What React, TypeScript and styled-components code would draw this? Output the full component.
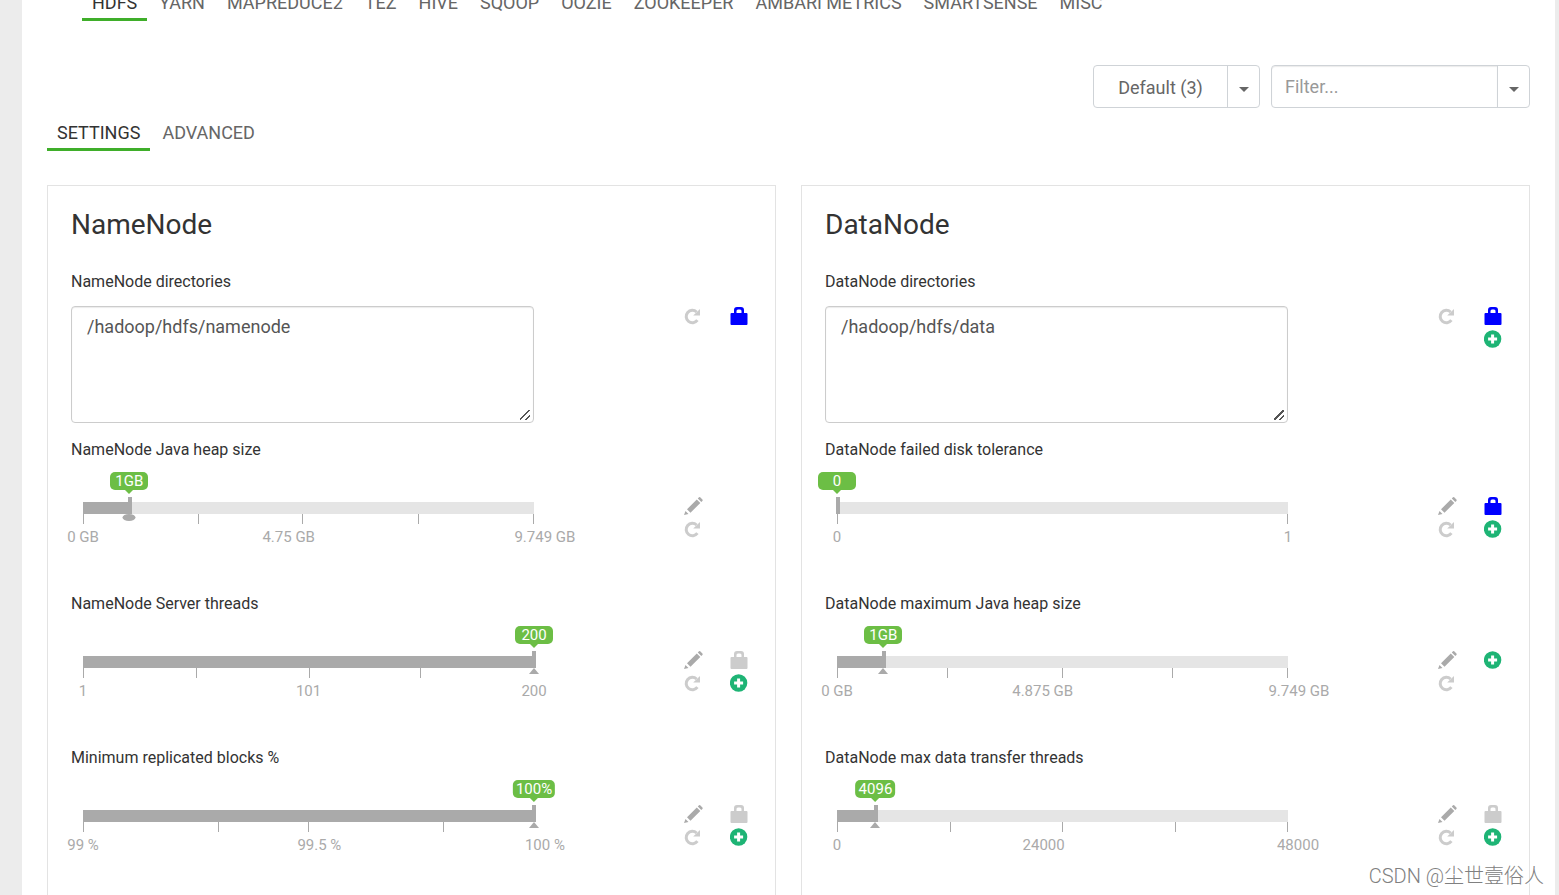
import React, { useState } from "react";
import styled, { createGlobalStyle, css } from "styled-components";

const GlobalStyle = createGlobalStyle`
  * { box-sizing: border-box; }
  body {
    margin: 0;
    background: #ececec;
    color: #333;
    font-family: Roboto, "Noto Sans CJK SC", sans-serif;
    font-size: 18px;
  }
`;

const Shell = styled.div`
  position: relative;
  height: 100vh;
  overflow: hidden;
  padding: 0 4px 0 22px;
`;

const Page = styled.main`
  min-height: 100vh;
  padding: 0 25px;
  background: #fff;
`;

const Tabs = styled.nav<{ $service?: boolean }>`
  display: flex;
  gap: 2px;
  ${(p) =>
    p.$service
      ? css`
          margin-top: -10px;
          padding-left: 35px;
        `
      : css`
          margin: 12px 0 34px;
        `}
`;

const Tab = styled.a<{ $active?: boolean }>`
  padding: 1px 10px 3px;
  border-bottom: 3px solid ${(p) => (p.$active ? "#3fae2a" : "transparent")};
  color: ${(p) => (p.$active ? "#333" : "#666")};
  font-size: 18px;
  line-height: 24px;
  white-space: nowrap;
  text-decoration: none;
  text-transform: uppercase;
`;

const Toolbar = styled.div`
  display: flex;
  justify-content: flex-end;
  gap: 11px;
  margin-top: 44px;
`;

const Group = styled.div`
  display: flex;
  height: 43px;
  border: 1px solid #cfd3d7;
  border-radius: 4px;
`;

const GroupButton = styled.button`
  width: 133px;
  padding: 2px 0 0;
  border: 0;
  background: none;
  color: #666;
  font: inherit;
`;

const CaretButton = styled.button`
  display: flex;
  align-items: center;
  justify-content: center;
  width: 32px;
  padding: 5px 0 0;
  border: 0;
  border-left: 1px solid #cfd3d7;
  background: none;

  &::after {
    content: "";
    border: 5px solid transparent;
    border-top-color: #666;
    border-bottom: 0;
  }
`;

const FilterInput = styled.input`
  width: 225px;
  padding: 0 13px 1px;
  border: 0;
  border-radius: 4px 0 0 4px;
  background: none;
  box-shadow: inset 0 1px 1px rgba(0, 0, 0, 0.08);
  color: #555;
  font: inherit;
  outline: 0;

  &::placeholder {
    color: #999;
  }
`;

const Panels = styled.div`
  display: grid;
  grid-template-columns: 1fr 1fr;
  gap: 25px;
`;

const Panel = styled.section`
  padding: 22px 23px 40px;
  border: 1px solid #e3e3e3;
`;

const PanelTitle = styled.h2`
  margin: 0 0 29px;
  font-size: 28px;
  font-weight: 400;
  line-height: 34px;
`;

const Field = styled.div<{ $slider?: boolean }>`
  min-height: ${(p) => (p.$slider ? 154 : 168)}px;
`;

const FieldLabel = styled.label`
  display: block;
  margin-bottom: 13px;
  font-size: 16px;
  line-height: 22px;
`;

const FieldRow = styled.div`
  display: grid;
  grid-template-columns: 68% 1fr;
`;

const DirectoryBox = styled.textarea`
  display: block;
  width: 100%;
  height: 117px;
  padding: 8px 15px;
  border: 1px solid #ccc;
  border-radius: 4px;
  box-shadow: inset 0 1px 1px rgba(0, 0, 0, 0.08);
  color: #555;
  font: inherit;
  line-height: 24px;
  outline: 0;

  &::-webkit-resizer {
    background: linear-gradient(
        135deg,
        transparent 44%,
        #555 44% 55%,
        transparent 55% 73%,
        #555 73% 84%,
        transparent 84%
      )
      2px 3px / 10px 10px no-repeat;
  }
`;

const Actions = styled.div<{ $slider?: boolean }>`
  display: flex;
  justify-content: flex-end;
  gap: 27px;
  padding: ${(p) => (p.$slider ? 23 : 1)}px 3px 0 0;
`;

const ActionColumn = styled.div`
  display: flex;
  flex-direction: column;
  gap: 5px;
  width: 19px;
`;

const IconButton = styled.button<{ $color: string }>`
  height: 18px;
  padding: 0;
  border: 0;
  background: none;
  color: ${(p) => p.$color};

  svg {
    display: block;
  }
`;

const SliderArea = styled.div`
  padding: 28px 0 0 12px;
`;

const Track = styled.div`
  position: relative;
  height: 12px;
  background: #e5e5e5;
`;

const Fill = styled.div`
  height: 100%;
  background: #aaa;
`;

const Range = styled.input`
  position: absolute;
  bottom: 0;
  left: -1px;
  width: calc(100% + 3px);
  height: 17px;
  margin: 0;
  appearance: none;
  background: none;
  outline: 0;

  &::-webkit-slider-thumb {
    appearance: none;
    width: 4px;
    height: 17px;
    background: #aaa;
  }
`;

const Bubble = styled.output`
  position: absolute;
  bottom: 24px;
  min-width: 38px;
  padding: 0 3px;
  border-radius: 5px;
  background: #6cbe45;
  color: #fff;
  font-size: 15px;
  line-height: 18px;
  text-align: center;
  transform: translateX(-50%);

  &::after {
    content: "";
    position: absolute;
    top: 100%;
    left: 50%;
    margin-left: -4px;
    border: 4px solid transparent;
    border-top-color: #6cbe45;
    border-bottom: 0;
  }
`;

const Marker = styled.span<{ $round?: boolean }>`
  position: absolute;
  top: 12px;
  transform: translateX(-50%);
  ${(p) =>
    p.$round
      ? css`
          width: 13px;
          height: 7px;
          border-radius: 50%;
          background: #aaa;
        `
      : css`
          border: 5px solid transparent;
          border-top: 0;
          border-bottom: 6px solid #aaa;
        `}
`;

const Tick = styled.span`
  position: absolute;
  top: 12px;
  width: 1px;
  height: 10px;
  background: #aaa;
`;

const TickLabel = styled.span`
  position: absolute;
  top: 25px;
  color: #aaa;
  font-size: 15px;
  line-height: 20px;
  white-space: nowrap;
  transform: translateX(-50%);
`;

const Watermark = styled.div`
  position: absolute;
  right: 15px;
  bottom: 5px;
  color: #808080;
  font-family: Roboto, "Noto Sans CJK SC", sans-serif;
  font-size: 20px;
  font-weight: 300;
  line-height: 28px;
  text-shadow: 1px 1px 0 #fff;
`;

type IconName = "pencil" | "undo" | "lock" | "locked" | "plus";

const iconColors: Record<IconName, string> = {
  pencil: "#aaa",
  undo: "#ccc",
  lock: "#ccc",
  locked: "#00f",
  plus: "#1eb475",
};

const iconLabels: Record<IconName, string> = {
  pencil: "Edit value",
  undo: "Undo change",
  lock: "Mark as final",
  locked: "Final property",
  plus: "Add override",
};

function Icon({ name }: { name: IconName }) {
  return (
    <svg width="19" height="18" viewBox="0 0 19 18" fill="currentColor" aria-hidden="true">
      {name === "pencil" && (
        <path d="M0 18 1.5 14 4.5 17ZM3 12.2 12.8 2.5 16.3 6 6.5 15.7ZM13.8 1.5 15 .3Q15.6-.2 16.200 .3L18.400 2.500Q19 3.200 18.400 3.900L17.300 5Z" />
      )}
      {name === "undo" && (
        <>
          <path d="M12.600 5A6.200 6.200 0 1 0 13.400 13.200" fill="none" stroke="currentColor" strokeWidth="3" />
          <path d="M16 2V8.400H9.200Z" />
        </>
      )}
      {(name === "lock" || name === "locked") && (
        <path
          fillRule="evenodd"
          d="M4 6V3Q4 0 7 0H11Q14 0 14 3V6H16.500Q17.500 6 17.500 7V17Q17.500 18 16.500 18H1.500Q.5 18 .5 17V7Q.5 6 1.500 6ZM6.500 6H11.500V4Q11.500 2.500 10 2.500H8Q6.500 2.500 6.500 4Z"
        />
      )}
      {name === "plus" && (
        <>
          <circle cx="8.600" cy="9" r="8.700" />
          <path d="M8.600 4.500V13.500M4.100 9H13.100" stroke="#fff" strokeWidth="3" />
        </>
      )}
    </svg>
  );
}

function ActionIcons({ columns, slider }: { columns: IconName[][]; slider?: boolean }) {
  return (
    <Actions $slider={slider}>
      {columns.map((names, i) => (
        <ActionColumn key={i}>
          {names.map((name) => (
            <IconButton key={name} type="button" $color={iconColors[name]} aria-label={iconLabels[name]}>
              <Icon name={name} />
            </IconButton>
          ))}
        </ActionColumn>
      ))}
    </Actions>
  );
}

interface DirectoryConfig {
  id: string;
  label: string;
  value: string;
  actions: IconName[][];
}

interface SliderConfig {
  id: string;
  label: string;
  min: number;
  max: number;
  value: number;
  unit: string;
  marker?: "round" | "triangle";
  ticks: number[];
  /* Caption text and the centre of the caption, in percent of the track. */
  captions: [string, number][];
  actions: IconName[][];
}

function DirectoryField({ config }: { config: DirectoryConfig }) {
  return (
    <Field>
      <FieldLabel htmlFor={config.id}>{config.label}</FieldLabel>
      <FieldRow>
        <DirectoryBox id={config.id} defaultValue={config.value} spellCheck={false} />
        <ActionIcons columns={config.actions} />
      </FieldRow>
    </Field>
  );
}

function SliderField({ config }: { config: SliderConfig }) {
  const { id, min, max, unit, marker } = config;
  const [value, setValue] = useState(config.value);
  const percent = (v: number) => ((v - min) / (max - min)) * 100;
  const left = `${percent(value)}%`;

  return (
    <Field $slider>
      <FieldLabel htmlFor={id}>{config.label}</FieldLabel>
      <FieldRow>
        <SliderArea>
          <Track>
            <Fill style={{ width: left }} />
            {config.ticks.map((t) => (
              <Tick key={t} style={{ left: `calc((100% - 1px) * ${percent(t) / 100})` }} />
            ))}
            {config.captions.map(([text, at]) => (
              <TickLabel key={text} style={{ left: `${at}%` }}>
                {text}
              </TickLabel>
            ))}
            {marker && <Marker $round={marker === "round"} style={{ left }} />}
            <Range
              id={id}
              type="range"
              min={min}
              max={max}
              step="any"
              value={value}
              onChange={(e) => setValue(Number(e.target.value))}
            />
            <Bubble htmlFor={id} style={{ left }}>
              {Math.round(value)}
              {unit}
            </Bubble>
          </Track>
        </SliderArea>
        <ActionIcons slider columns={config.actions} />
      </FieldRow>
    </Field>
  );
}

const services = [
  "HDFS", "YARN", "MapReduce2", "Tez", "Hive", "Sqoop", "Oozie",
  "ZooKeeper", "Ambari Metrics", "SmartSense", "Misc",
];

const panels: { title: string; directory: DirectoryConfig; sliders: SliderConfig[] }[] = [
  {
    title: "NameNode",
    directory: {
      id: "nn-dirs",
      label: "NameNode directories",
      value: "/hadoop/hdfs/namenode",
      actions: [["undo"], ["locked"]],
    },
    sliders: [
      {
        id: "nn-heap",
        label: "NameNode Java heap size",
        min: 0, max: 9.749, value: 1, unit: "GB", marker: "round",
        ticks: [0, 2.5, 4.75, 7.25, 9.749],
        captions: [["0 GB", 0], ["4.75 GB", 45.6], ["9.749 GB", 102.4]],
        actions: [["pencil", "undo"], []],
      },
      {
        id: "nn-threads",
        label: "NameNode Server threads",
        min: 1, max: 200, value: 200, unit: "", marker: "triangle",
        ticks: [1, 51, 101, 150],
        captions: [["1", 0], ["101", 50], ["200", 100]],
        actions: [["pencil", "undo"], ["lock", "plus"]],
      },
      {
        id: "nn-blocks",
        label: "Minimum replicated blocks %",
        min: 99, max: 100, value: 100, unit: "%", marker: "triangle",
        ticks: [99, 99.3, 99.5, 99.8],
        captions: [["99 %", 0], ["99.5 %", 52.4], ["100 %", 102.4]],
        actions: [["pencil", "undo"], ["lock", "plus"]],
      },
    ],
  },
  {
    title: "DataNode",
    directory: {
      id: "dn-dirs",
      label: "DataNode directories",
      value: "/hadoop/hdfs/data",
      actions: [["undo"], ["locked", "plus"]],
    },
    sliders: [
      {
        id: "dn-tolerance",
        label: "DataNode failed disk tolerance",
        min: 0, max: 1, value: 0, unit: "",
        ticks: [0, 1],
        captions: [["0", 0], ["1", 100]],
        actions: [["pencil", "undo"], ["locked", "plus"]],
      },
      {
        id: "dn-heap",
        label: "DataNode maximum Java heap size",
        min: 0, max: 9.749, value: 1, unit: "GB", marker: "triangle",
        ticks: [0, 2.375, 4.875, 7.25, 9.749],
        captions: [["0 GB", 0], ["4.875 GB", 45.6], ["9.749 GB", 102.4]],
        actions: [["pencil", "undo"], ["plus"]],
      },
      {
        id: "dn-transfer",
        label: "DataNode max data transfer threads",
        min: 0, max: 48000, value: 4096, unit: "", marker: "triangle",
        ticks: [0, 12000, 24000, 36000, 48000],
        captions: [["0", 0], ["24000", 45.8], ["48000", 102.2]],
        actions: [["pencil", "undo"], ["lock", "plus"]],
      },
    ],
  },
];

export default function App() {
  return (
    <Shell>
      <GlobalStyle />
      <Page>
        <Tabs $service aria-label="Services">
          {services.map((name, i) => (
            <Tab key={name} href={`#${name}`} $active={i === 0}>
              {name}
            </Tab>
          ))}
        </Tabs>
        <Toolbar>
          <Group>
            <GroupButton type="button">Default (3)</GroupButton>
            <CaretButton type="button" aria-label="Choose config group" />
          </Group>
          <Group>
            <FilterInput type="text" placeholder="Filter..." aria-label="Filter" />
            <CaretButton type="button" aria-label="Filter options" />
          </Group>
        </Toolbar>
        <Tabs aria-label="Configuration">
          <Tab href="#settings" $active>
            Settings
          </Tab>
          <Tab href="#advanced">Advanced</Tab>
        </Tabs>
        <Panels>
          {panels.map((panel) => (
            <Panel key={panel.title}>
              <PanelTitle>{panel.title}</PanelTitle>
              <DirectoryField config={panel.directory} />
              {panel.sliders.map((slider) => (
                <SliderField key={slider.id} config={slider} />
              ))}
            </Panel>
          ))}
        </Panels>
      </Page>
      <Watermark>CSDN @尘世壹俗人</Watermark>
    </Shell>
  );
}
